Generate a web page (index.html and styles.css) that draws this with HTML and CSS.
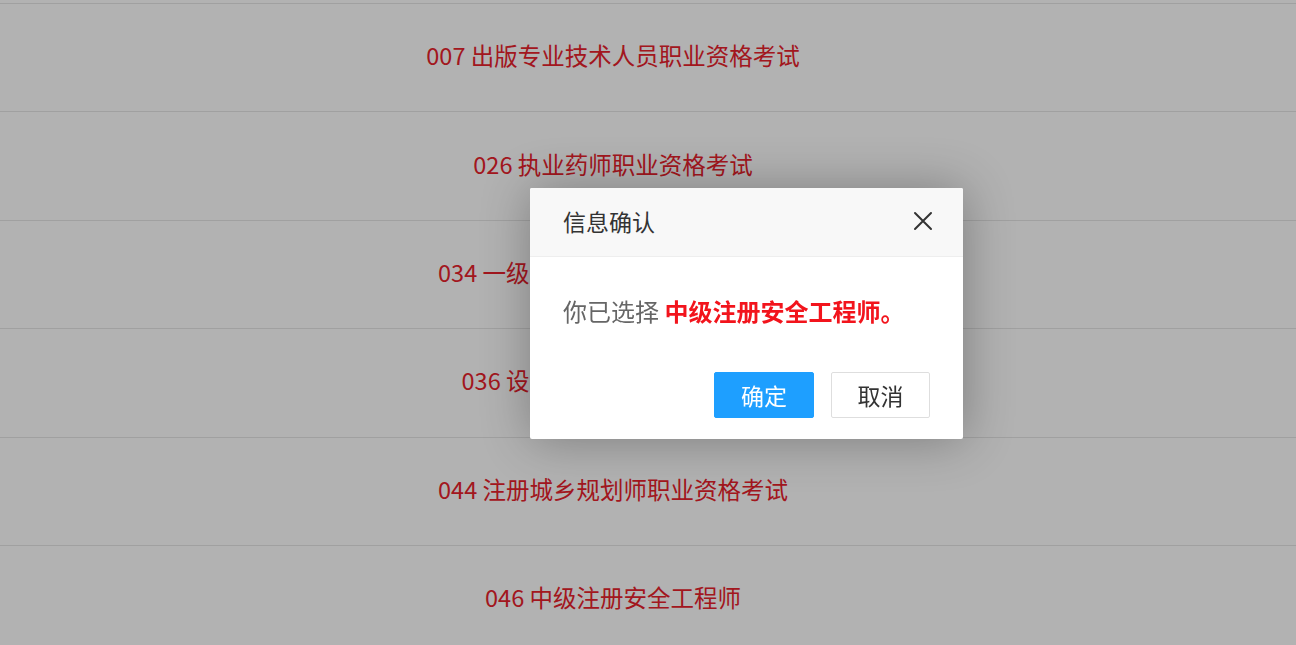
FILE: index.html
```html
<!DOCTYPE html>
<html lang="zh-CN">
<head>
<meta charset="utf-8">
<title>信息确认</title>
<link rel="stylesheet" href="styles.css">
</head>
<body>
<div class="list">
  <div class="row"><a class="item">007 出版专业技术人员职业资格考试</a></div>
  <div class="row"><a class="item">026 执业药师职业资格考试</a></div>
  <div class="row"><a class="item">034 一级注册消防工程师资格考试</a></div>
  <div class="row"><a class="item">036 设备监理师职业资格考试</a></div>
  <div class="row"><a class="item">044 注册城乡规划师职业资格考试</a></div>
  <div class="row"><a class="item">046 中级注册安全工程师</a></div>
</div>
<div class="shade"></div>
<div class="layer">
  <div class="layer-title">
    <span>信息确认</span>
    <svg class="close" width="20" height="20" viewBox="0 0 20 20"><path d="M2 2 L18 18 M18 2 L2 18" stroke="#333" stroke-width="2" fill="none" stroke-linecap="round"/></svg>
  </div>
  <div class="layer-content">你已选择 <b class="hl">中级注册安全工程师。</b></div>
  <div class="layer-btns">
    <a class="btn btn-primary">确定</a>
    <a class="btn">取消</a>
  </div>
</div>
</body>
</html>
```

FILE: styles.css
```css
html, body {
  margin: 0;
  padding: 0;
  background: #fff;
  font-family: "Noto Sans CJK SC", "Noto Sans", sans-serif;
  overflow: hidden;
  height: 645px;
}
.list {
  padding-top: 3px;
}
.row {
  box-sizing: border-box;
  border-top: 1px solid #e6e6e6;
  height: 108.4px;
  display: flex;
  align-items: center;
  justify-content: center;
  padding: 0 70px 5px 0;
}
.item {
  font-size: 23.5px;
  color: #e8222c;
  line-height: 30px;
}
.shade {
  position: fixed;
  left: 0;
  top: 0;
  width: 100%;
  height: 100%;
  background: rgba(0, 0, 0, 0.3);
}
.layer {
  position: absolute;
  left: 530px;
  top: 188px;
  width: 433px;
  height: 251px;
  background: #fff;
  border-radius: 2px;
  box-shadow: 1px 1px 50px rgba(0, 0, 0, 0.3);
  display: flex;
  flex-direction: column;
}
.layer-title {
  box-sizing: border-box;
  height: 69px;
  flex: none;
  background: #f8f8f8;
  border-bottom: 1px solid #eee;
  border-radius: 2px 2px 0 0;
  display: flex;
  align-items: center;
  justify-content: space-between;
  padding: 0 30px 2px 33px;
  font-size: 23px;
  color: #333;
}
.close {
  display: block;
}
.layer-content {
  padding: 39px 33px 0;
  line-height: 30px;
  font-size: 24px;
  color: #666;
}
.hl {
  color: #f2141c;
  font-weight: bold;
}
.layer-btns {
  display: flex;
  justify-content: flex-end;
  gap: 17px;
  padding: 46px 33px 0;
}
.btn {
  box-sizing: border-box;
  width: 99px;
  height: 46px;
  border: 1px solid #dedede;
  border-radius: 2px;
  background: #fff;
  color: #333;
  font-size: 23px;
  display: flex;
  align-items: center;
  justify-content: center;
}
.btn-primary {
  width: 100px;
  background: #1e9fff;
  border-color: #1e9fff;
  color: #fff;
}
```
